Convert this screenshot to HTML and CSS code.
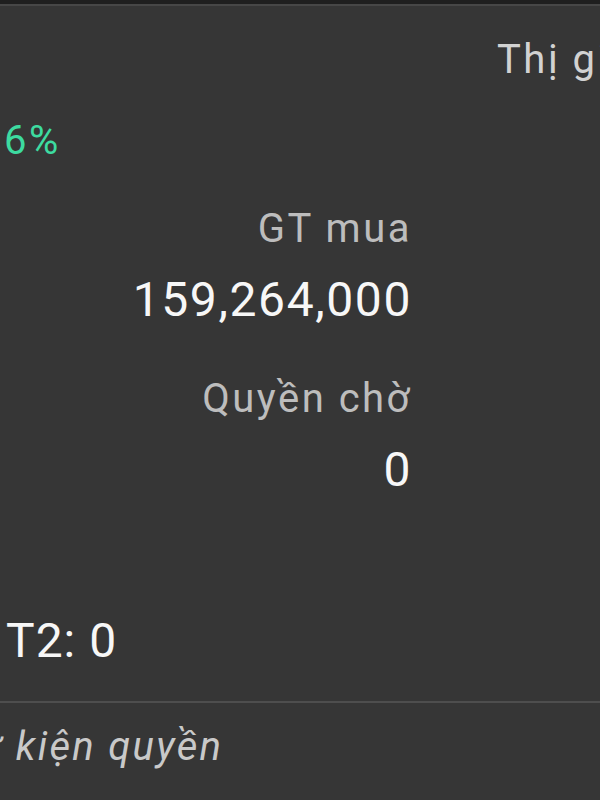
FILE: index.html
```html
<!DOCTYPE html>
<html lang="vi">
<head>
  <meta charset="UTF-8" />
  <meta name="viewport" content="width=device-width, initial-scale=1.0"/>
  <title>Tài sản</title>
  <link rel="stylesheet" href="styles.css">
</head>
<body>
  <div class="topbar"></div>

  <div class="panel">
    <div class="market">Thị giá</div>
    <div class="change">6%</div>

    <div class="stats">
      <div class="label">GT mua</div>
      <div class="value">159,264,000</div>
      <div class="label gap">Quyền chờ</div>
      <div class="value">0</div>
    </div>

    <div class="t2">T2: 0</div>
  </div>

  <div class="divider"></div>

  <div class="events">Sự kiện quyền</div>
</body>
</html>
```

FILE: styles.css
```css
html, body {
  margin: 0;
  height: 100%;
}
body {
  background: #363636;
  font-family: Roboto, "Noto Sans", Arial, sans-serif;
  color: #f5f5f5;
  overflow: hidden;
  white-space: nowrap;
}
.topbar {
  height: 4px;
  background: #1f1f1f;
  border-bottom: 2px solid #474747;
}
.panel {
  font-size: 40px;
  line-height: 48px;
  letter-spacing: 2.5px;
}
.market {
  margin-top: 30px;
  padding-left: 497px;
  color: #d2d2d2;
}
.change {
  margin-top: 33px;
  padding-left: 4px;
  color: #3ddba0;
}
.stats {
  width: 412px;
  margin-top: 40px;
  text-align: right;
}
.label {
  color: #bdbdbd;
}
.label.gap {
  margin-top: 47px;
}
.value {
  margin-top: 19px;
  font-size: 48px;
  line-height: 56px;
  letter-spacing: 1.6px;
  color: #f7f7f7;
}
.t2 {
  margin-top: 115px;
  padding-left: 6px;
  font-size: 48px;
  line-height: 56px;
  letter-spacing: 1px;
  color: #f7f7f7;
}
.divider {
  margin-top: 32px;
  height: 2px;
  background: #4e4e4e;
}
.events {
  margin-top: 20px;
  margin-left: -48px;
  font-size: 40px;
  line-height: 48px;
  letter-spacing: 2.3px;
  font-style: italic;
  color: #c9c9c9;
}
```
